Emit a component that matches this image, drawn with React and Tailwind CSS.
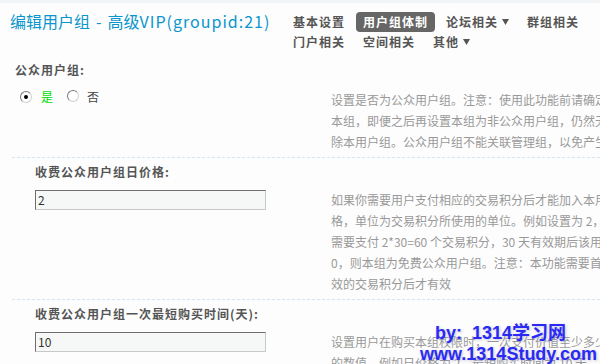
import React from "react";

function Tri() {
  return (
    <svg width="7" height="6" viewBox="0 0 7 6" className="inline-block ml-[4px] mb-[3px]">
      <path d="M0 0 H7 L3.5 6 Z" fill="#555" />
    </svg>
  );
}

function Tab({ children, active, tri }) {
  return (
    <div
      className={
        "h-[20px] leading-[20px] px-[7px] mr-[4px] text-[12px] font-bold tracking-[1px] rounded-[4px] whitespace-nowrap " +
        (active ? "bg-[#666666] text-white" : "text-[#555555]")
      }
    >
      {children}
      {tri && <Tri />}
    </div>
  );
}

function Radio({ checked }) {
  return (
    <span className="relative inline-block w-[12px] h-[12px] rounded-full border border-t-[#7a7a7a] border-l-[#7a7a7a] border-b-[#d0d0d0] border-r-[#d0d0d0] bg-white shrink-0">
      {checked && (
        <span className="absolute left-[3px] top-[3px] w-[4px] h-[4px] rounded-full bg-black" />
      )}
    </span>
  );
}

function Box({ value }) {
  return (
    <div className="mt-[8px] w-[231px] h-[20px] bg-[#f5f8f7] border border-t-[#6e6e6e] border-l-[#6e6e6e] border-b-[#c8c8c8] border-r-[#c8c8c8] pl-[2px] text-[12px] leading-[18px] text-[#333]">
      {value}
    </div>
  );
}

function Desc({ lines, pt }) {
  return (
    <div className={"pb-[5px] text-[12px] leading-[21px] text-[#999999] whitespace-nowrap " + pt}>
      {lines.map((l, i) => (
        <div key={i}>{l}</div>
      ))}
    </div>
  );
}

export default function App() {
  return (
    <div className="relative w-[600px] h-[364px] overflow-hidden bg-[#fdfdfd] font-['Noto_Sans_CJK_SC',sans-serif]">
      <div className="h-[3px] bg-[#f2f5f8]" />
      <div className="flex h-[53px]">
        <div className="w-[286px] pl-[10px] pt-[5px] text-[16px] leading-[26px] text-[#0a96cc] whitespace-nowrap">
          编辑用户组<span className="px-[6px]">-</span>高级<span className="tracking-[1px]">VIP(groupid:21)</span>
        </div>
        <div className="pt-[9px] flex flex-col">
          <div className="flex">
            <Tab>基本设置</Tab>
            <Tab active>用户组体制</Tab>
            <Tab tri>论坛相关</Tab>
            <Tab>群组相关</Tab>
          </div>
          <div className="flex">
            <Tab>门户相关</Tab>
            <Tab>空间相关</Tab>
            <Tab tri>其他</Tab>
          </div>
        </div>
      </div>

      <div className="ml-[12px]">
        <div className="flex border-b border-dashed border-[#d4e6f3]">
          <div className="w-[319px] shrink-0 pl-[3px] pt-[4px]">
            <div className="h-[20px] leading-[20px] text-[12px] font-bold tracking-[1px] text-[#555555]">公众用户组:</div>
            <div className="mt-[7px] h-[20px] flex items-center pl-[5px] text-[12px]">
              <Radio checked />
              <span className="ml-[9px] text-[#00dd00]">是</span>
              <span className="ml-[14px]"><Radio /></span>
              <span className="ml-[8px] text-[#444]">否</span>
            </div>
          </div>
          <Desc
            pt="pt-[33px]"
            lines={[
              "设置是否为公众用户组。注意：使用此功能前请确定用户组权限，公众用户组允许用户自由加入",
              "本组，即便之后再设置本组为非公众用户组，仍然无法删除已加入此组的用户，除非删",
              "除本用户组。公众用户组不能关联管理组，以免产生安全问题",
            ]}
          />
        </div>

        <div className="flex border-b border-dashed border-[#d4e6f3]">
          <div className="w-[319px] shrink-0 pl-[23px] pt-[4px]">
            <div className="h-[20px] leading-[20px] text-[12px] font-bold tracking-[1px] text-[#555555]">收费公众用户组日价格:</div>
            <Box value="2" />
          </div>
          <Desc
            pt="pt-[31px]"
            lines={[
              "如果你需要用户支付相应的交易积分后才能加入本用户组，请在此设置每天的价",
              "格，单位为交易积分所使用的单位。例如设置为 2，则用户加入本组 30 天",
              "需要支付 2*30=60 个交易积分，30 天有效期后该用户将被自动移出本组。设为",
              "0，则本组为免费公众用户组。注意：本功能需要首先设置至少一种可用于交易的有",
              "效的交易积分后才有效",
            ]}
          />
        </div>

        <div className="flex">
          <div className="w-[319px] shrink-0 pl-[23px] pt-[4px]">
            <div className="h-[20px] leading-[20px] text-[12px] font-bold tracking-[1px] text-[#555555]">收费公众用户组一次最短购买时间(天):</div>
            <Box value="10" />
          </div>
          <Desc
            pt="pt-[31px]"
            lines={[
              "设置用户在购买本组权限时，一次支付价值至少多少天的交易积分，必须大于 0",
              "的数值，例如日价格为 2，最短购买时间为 10 天，则用户一次至少支付 20",
            ]}
          />
        </div>
      </div>

      <div className="absolute left-[420px] top-[321px] font-['Liberation_Sans',sans-serif] font-bold text-[18px] leading-[21px] text-[#2a2af2] [text-shadow:1px_1px_3px_rgba(90,90,170,0.35)] whitespace-nowrap">
        <div className="pl-[15px]">by:&nbsp; 1314<span className="font-['Noto_Sans_CJK_SC',sans-serif]">学习网</span></div>
        <div>www.1314Study.com</div>
      </div>
    </div>
  );
}
